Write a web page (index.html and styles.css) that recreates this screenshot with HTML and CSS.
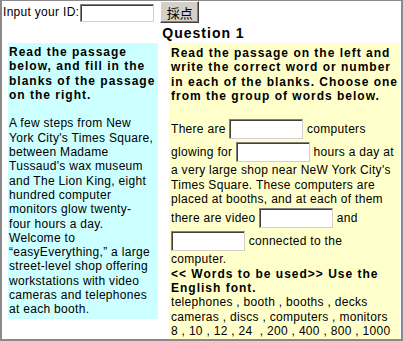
FILE: index.html
```html
<!DOCTYPE html>
<html>
<head>
<meta charset="utf-8">
<title>Question 1</title>
<link rel="stylesheet" href="styles.css">
</head>
<body>
<div class="frame">
  <form class="idrow">
    <label class="idlabel" for="uid">Input your ID:</label>
    <input id="uid" class="box box-id" type="text">
    <button class="btn" type="button">採点</button>
  </form>
  <h1 class="title">Question 1</h1>
  <div class="cols">
    <div class="col col-left">
      <p class="lead">Read the passage<br>below, and fill in the<br>blanks of the passage<br>on the right.</p>
      <p class="text spaced">A few steps from New<br>York City's Times Square,<br>between Madame<br>Tussaud's wax museum<br>and The Lion King, eight<br>hundred computer<br>monitors glow twenty-<br>four hours a day.<br>Welcome to<br>“easyEverything,” a large<br>street-level shop offering<br>workstations with video<br>cameras and telephones<br>at each booth.</p>
    </div>
    <div class="col col-right">
      <p class="lead">Read the passage on the left and<br>write the correct word or number<br>in each of the blanks. Choose one<br>from the group of words below.</p>
      <p class="text spaced">There are <input class="box" type="text"> computers<br>glowing for <input class="box" type="text"> hours a day at<br>a very large shop near NeW York City's<br>Times Square. These computers are<br>placed at booths, and at each of them<br>there are video <input class="box" type="text"> and<br><input class="box" type="text"> connected to the<br>computer.</p>
      <p class="lead">&lt;&lt; Words to be used&gt;&gt; Use the<br>English font.</p>
      <p class="text">telephones , booth , booths , decks<br>cameras , discs , computers , monitors<br>8 , 10 , 12 , 24&nbsp; , 200 , 400 , 800 , 1000</p>
    </div>
  </div>
</div>
</body>
</html>
```

FILE: styles.css
```css
html, body {
  margin: 0;
  padding: 0;
  background: #ffffff;
}

.frame {
  width: 403px;
  height: 341px;
  box-sizing: border-box;
  border: 2px solid #8a8a8a;
  border-top-width: 1px;
  overflow: hidden;
  font-family: "Liberation Sans", Arial, "Noto Sans CJK JP", sans-serif;
  font-size: 12px;
  color: #000000;
}

.idrow {
  display: flex;
  align-items: center;
  height: 22px;
  margin: 0;
  padding-left: 1px;
}

.idlabel {
  letter-spacing: 0.3px;
}

.box {
  box-sizing: border-box;
  width: 74px;
  height: 20px;
  margin: 2px 0 1px 0;
  padding: 0 2px;
  border: 1px solid;
  border-color: #808080 #d4d0c8 #d4d0c8 #808080;
  box-shadow: inset 1px 1px 0 #404040;
  background: #ffffff;
  font: inherit;
}

.box-id {
  height: 18px;
  margin: 2px 0 0 1px;
}

.btn {
  box-sizing: border-box;
  width: 39px;
  height: 22px;
  margin: 0 0 0 6px;
  padding: 0;
  border: 1px solid;
  border-color: #ffffff #404040 #404040 #ffffff;
  box-shadow: inset -1px -1px 0 #808080;
  background: #d4d0c8;
  font-family: "Noto Sans CJK JP", sans-serif;
  font-size: 13px;
  color: #000000;
}

.title {
  margin: 0;
  height: 20px;
  line-height: 20px;
  text-align: center;
  font-size: 14px;
  font-weight: bold;
  letter-spacing: 1px;
  padding-left: 4px;
}

.cols {
  display: flex;
  align-items: flex-start;
  gap: 11px;
  padding-left: 6px;
}

.col {
  box-sizing: border-box;
  line-height: 14.3px;
  white-space: nowrap;
}

.col-left {
  width: 150px;
  padding: 2px 0 2px 1px;
  background: #ccffff;
}

.col-right {
  width: 231px;
  padding: 3px 0 3px 2px;
  background: #ffffcc;
}

.lead {
  margin: 0;
  font-weight: bold;
  letter-spacing: 1px;
}

.text {
  margin: 0;
  letter-spacing: 0.3px;
}

.spaced {
  margin-top: 14.3px;
}
```
